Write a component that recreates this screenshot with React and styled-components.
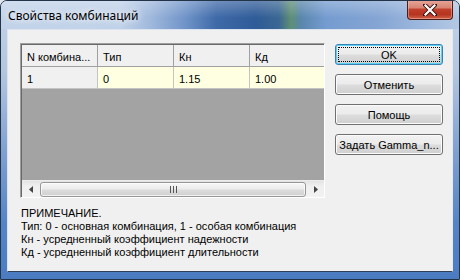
import React from "react";
import styled, { createGlobalStyle } from "styled-components";

const Global = createGlobalStyle`
  html, body { margin: 0; padding: 0; background: #dfe6ee; }
  body { width: 460px; height: 280px; overflow: hidden; }
  * { box-sizing: border-box; }
`;

const Window = styled.div`
  width: 460px;
  height: 280px;
  border: 1px solid #243448;
  border-radius: 7px 7px 0 0;
  background: linear-gradient(180deg, #c4d4e9 0%, #b4c7df 25%, #7f9fcf 55%, #5584c6 80%, #4b7cc2 100%);
  display: flex;
  flex-direction: column;
  overflow: hidden;
`;

const TitleBar = styled.div`
  height: 28px;
  display: flex;
  align-items: center;
  padding-left: 7px;
  background:
    linear-gradient(180deg, rgba(255,255,255,0.25) 0%, rgba(255,255,255,0) 60%),
    linear-gradient(90deg, #c2d3e9 0px, #c0d2e9 120px, #9fb8dc 150px, #6f93c8 185px, #3f6aa8 215px, #2f5b98 255px, #3b6793 278px, #5f8f74 290px, #5a86ad 300px, #759cd0 325px, #86a6d4 380px, #a3bde0 430px, #b4c8e4 460px);
`;

const Title = styled.span`
  font-family: "Noto Sans", "Open Sans", sans-serif;
  font-size: 12px;
  color: #000;
  text-shadow: 0 0 6px rgba(255,255,255,0.9), 0 0 10px rgba(255,255,255,0.7);
`;

const CloseButton = styled.div`
  margin-left: auto;
  margin-right: 6px;
  align-self: flex-start;
  margin-top: -1px;
  width: 46px;
  height: 20px;
  border: 1px solid #4a1d16;
  border-top: none;
  border-radius: 0 0 4px 4px;
  background: linear-gradient(180deg, #e8a79a 0%, #d88574 40%, #c0402c 50%, #b5331f 75%, #d0614a 100%);
  box-shadow: inset 0 0 0 1px rgba(255,200,190,0.45);
  display: flex;
  align-items: center;
  justify-content: center;
`;

const Client = styled.div`
  flex: 1;
  margin: 0 6px 7px 6px;
  background: #f0f0f0;
  border: 1px solid;
  border-color: #dbe3ee #e4eaf2 #2f3f57 #dbe3ee;
  padding: 13px 9px 0 12px;
  display: flex;
  flex-direction: column;
  font-family: "Liberation Sans", Arial, sans-serif;
  font-size: 11px;
  color: #000;
`;

const TopRow = styled.div`
  display: flex;
  gap: 10px;
`;

const Grid = styled.div`
  width: 305px;
  height: 155px;
  border: 1px solid;
  border-color: #a0a0a0 #ffffff #ffffff #a0a0a0;
  box-shadow: inset 1px 1px 0 #696969;
  background: #a3a3a3;
  display: flex;
  flex-direction: column;
  overflow: hidden;
  padding: 1px 0 0 1px;
`;

const GridRow = styled.div`
  display: grid;
  grid-template-columns: repeat(4, 76px);
  height: 22px;
  flex: none;
`;

const HeaderCell = styled.div`
  background: #f0f0f0;
  border-right: 1px solid #a0a0a0;
  border-bottom: 1px solid #a0a0a0;
  padding: 2px 0 0 5px;
  display: flex;
  align-items: center;
  white-space: nowrap;
  overflow: hidden;
`;

const DataCell = styled.div`
  background: ${(p) => (p.$fixed ? "#f0f0f0" : "#ffffe1")};
  border-right: 1px solid #c4c4c4;
  border-bottom: 1px solid #c4c4c4;
  padding: 2px 0 0 5px;
  display: flex;
  align-items: center;
  white-space: nowrap;
`;

const Workspace = styled.div`
  flex: 1;
  background: #a3a3a3;
`;

const HScroll = styled.div`
  height: 17px;
  flex: none;
  display: flex;
  align-items: center;
  background: linear-gradient(180deg, #e3e3e3 0%, #efefef 30%, #f2f2f2 100%);
  border-top: 1px solid #ececec;
`;

const Arrow = styled.div`
  width: 17px;
  height: 16px;
  display: flex;
  align-items: center;
  justify-content: center;
  flex: none;
`;

const Thumb = styled.div`
  flex: 1;
  height: 15px;
  margin: 0 1px;
  border: 1px solid #979797;
  border-radius: 3px;
  background: linear-gradient(180deg, #f7f7f7 0%, #ececec 45%, #dcdcdc 55%, #d0d0d0 100%);
  box-shadow: inset 0 0 0 1px rgba(255,255,255,0.7);
  display: flex;
  align-items: center;
  justify-content: center;
`;

const Buttons = styled.div`
  width: 108px;
  margin-left: auto;
  display: flex;
  flex-direction: column;
  gap: 9px;
  padding-top: 1px;
`;

const Button = styled.div`
  position: relative;
  height: 21px;
  border: 1px solid ${(p) => (p.$default ? "#3c7fb1" : "#707070")};
  border-radius: 3px;
  background: linear-gradient(180deg, #f2f2f2 0%, #ebebeb 48%, #dddddd 52%, #cfcfcf 100%);
  box-shadow: inset 0 0 0 1px ${(p) => (p.$default ? "#58d4f8" : "#fbfbfb")};
  display: flex;
  align-items: center;
  justify-content: center;
  white-space: nowrap;
  &::after {
    content: "";
    display: ${(p) => (p.$default ? "block" : "none")};
    position: absolute;
    inset: 2px;
    border: 1px dotted #000;
  }
`;

const Notes = styled.div`
  margin-top: 9px;
  padding-left: 1px;
  line-height: 13px;
`;

const columns = ["N комбина...", "Тип", "Кн", "Кд"];
const row = ["1", "0", "1.15", "1.00"];
const buttons = ["OK", "Отменить", "Помощь", "Задать Gamma_n..."];
const notes = [
  "ПРИМЕЧАНИЕ.",
  "Тип: 0 - основная комбинация, 1 - особая комбинация",
  "Кн - усредненный коэффициент надежности",
  "Кд - усредненный коэффициент длительности",
];

export default function App() {
  return (
    <>
      <Global />
      <Window>
        <TitleBar>
          <Title>Свойства комбинаций</Title>
          <CloseButton>
            <svg width="14" height="12" viewBox="0 0 14 12">
              <path d="M2 1 L12 11 M12 1 L2 11" stroke="#3a1410" strokeWidth="4" strokeLinecap="square" />
              <path d="M2.5 1.5 L11.5 10.5 M11.5 1.5 L2.5 10.5" stroke="#ffffff" strokeWidth="2.2" strokeLinecap="square" />
            </svg>
          </CloseButton>
        </TitleBar>
        <Client>
          <TopRow>
            <Grid>
              <GridRow>
                {columns.map((c) => (
                  <HeaderCell key={c}>{c}</HeaderCell>
                ))}
              </GridRow>
              <GridRow>
                {row.map((v, i) => (
                  <DataCell key={i} $fixed={i === 0}>{v}</DataCell>
                ))}
              </GridRow>
              <Workspace />
              <HScroll>
                <Arrow>
                  <svg width="4" height="7" viewBox="0 0 4 7">
                    <path d="M4 0 L0 3.5 L4 7 Z" fill="#444" />
                  </svg>
                </Arrow>
                <Thumb>
                  <svg width="7" height="7" viewBox="0 0 7 7">
                    <path d="M0.5 0 V7 M3.5 0 V7 M6.5 0 V7" stroke="#555" strokeWidth="1" />
                  </svg>
                </Thumb>
                <Arrow>
                  <svg width="4" height="7" viewBox="0 0 4 7">
                    <path d="M0 0 L4 3.5 L0 7 Z" fill="#444" />
                  </svg>
                </Arrow>
              </HScroll>
            </Grid>
            <Buttons>
              {buttons.map((b, i) => (
                <Button key={b} $default={i === 0}>{b}</Button>
              ))}
            </Buttons>
          </TopRow>
          <Notes>
            {notes.map((n) => (
              <div key={n}>{n}</div>
            ))}
          </Notes>
        </Client>
      </Window>
    </>
  );
}
